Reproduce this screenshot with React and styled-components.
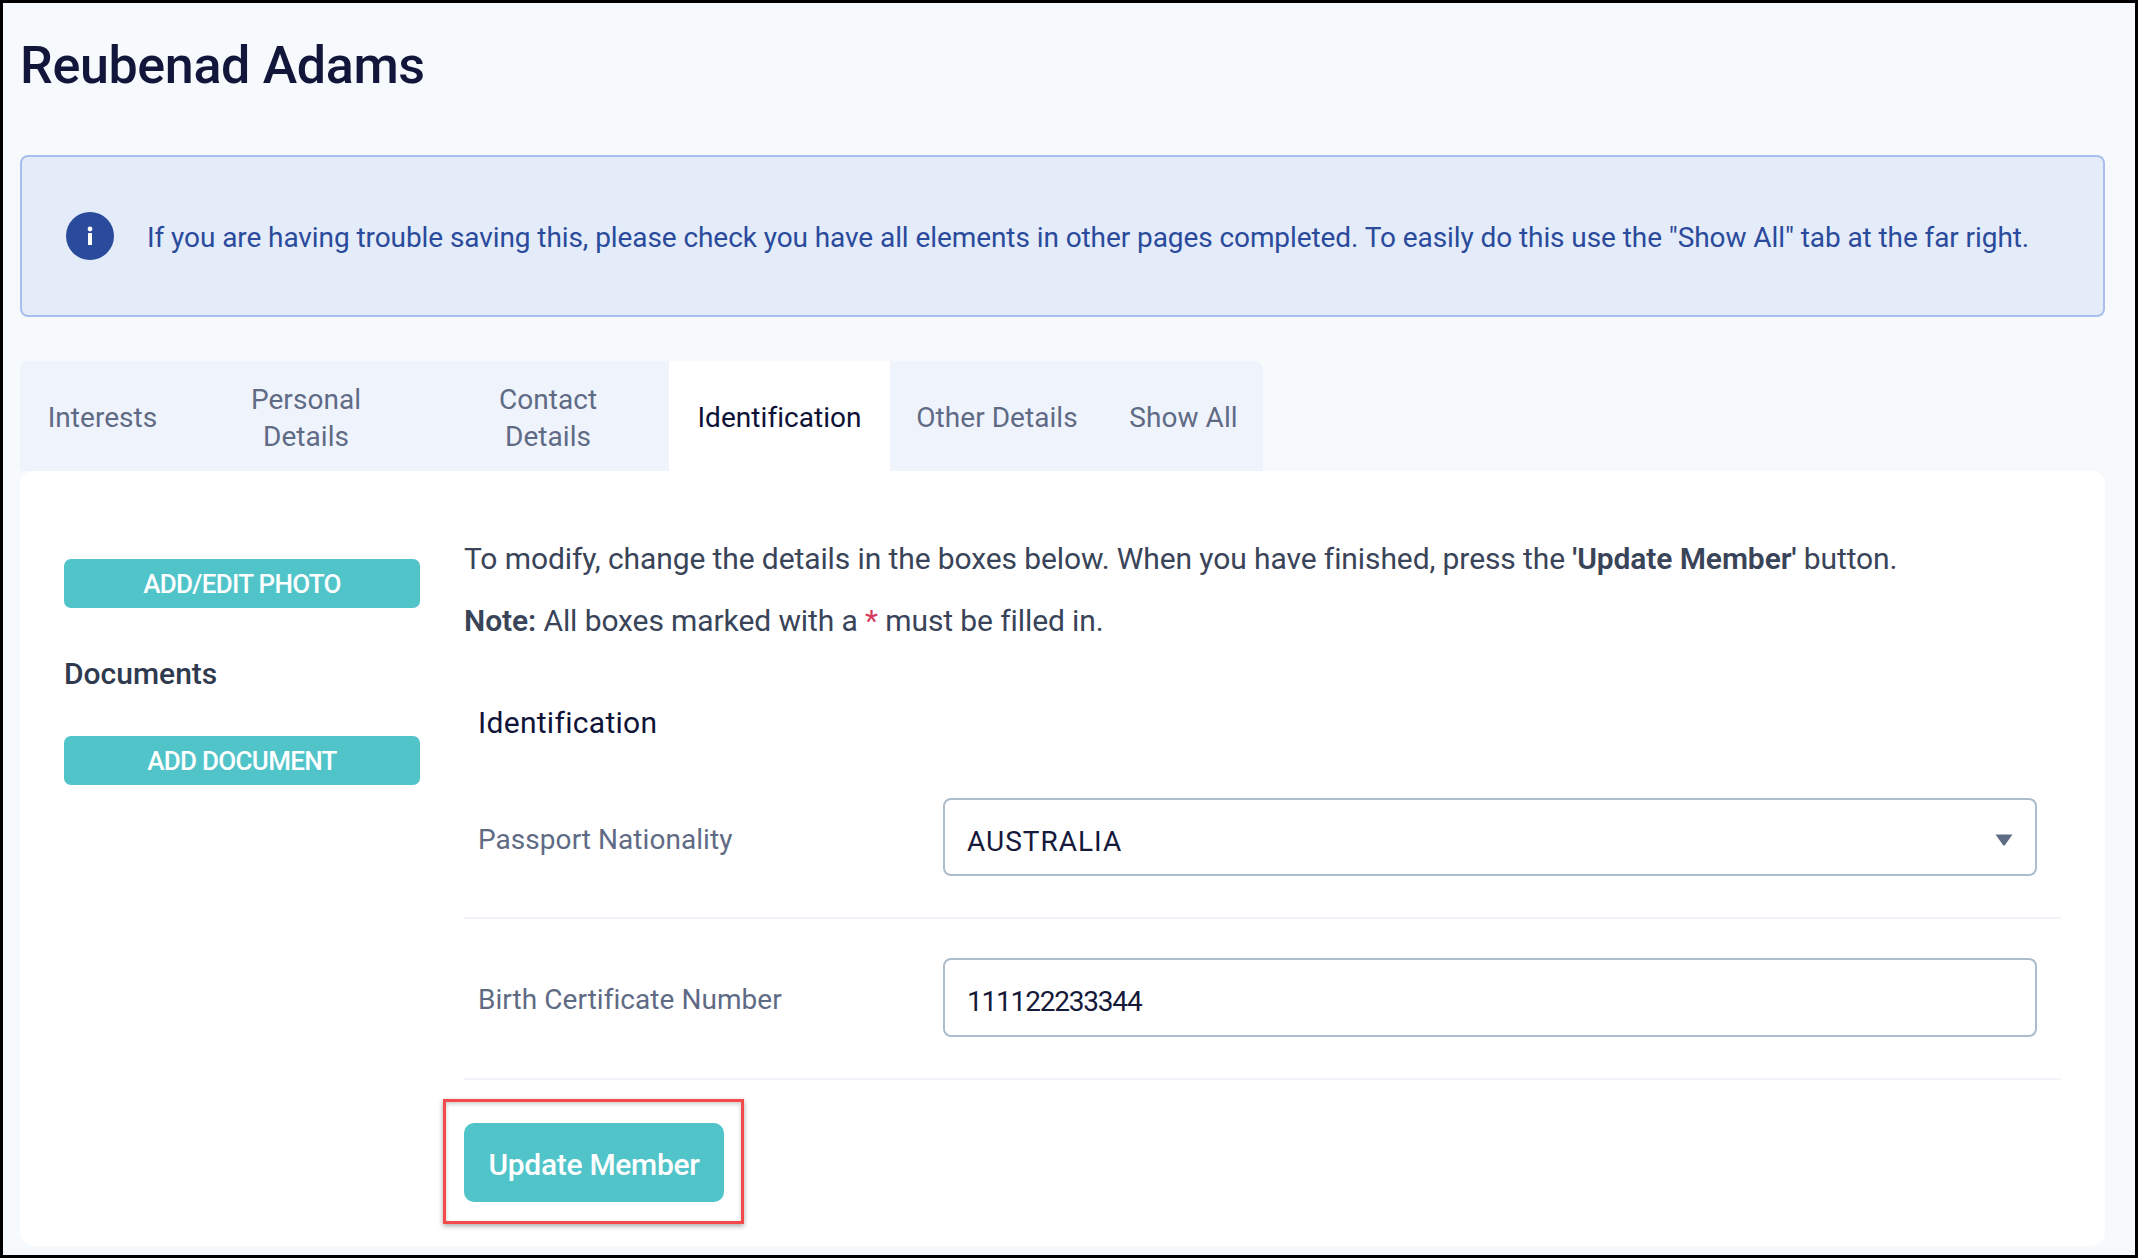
import React from 'react';
import styled, { createGlobalStyle } from 'styled-components';

const GlobalStyle = createGlobalStyle`
  html, body {
    margin: 0;
    padding: 0;
    background: #000;
  }
  * {
    box-sizing: border-box;
  }
`;

const Page = styled.div`
  width: 2138px;
  height: 1258px;
  border: 3px solid #000;
  background: #f6fafd;
  padding: 0 30px 0 17px;
  overflow: hidden;
  font-family: Roboto, 'Liberation Sans', sans-serif;
  font-size: 28px;
  line-height: 36px;
`;

const Title = styled.h1`
  margin: 0;
  padding-top: 33px;
  height: 152px;
  font-size: 52px;
  line-height: 60px;
  font-weight: 500;
  letter-spacing: -0.35px;
  color: #11163a;
`;

const Alert = styled.div`
  height: 162px;
  display: flex;
  align-items: center;
  gap: 33px;
  padding-left: 44px;
  background: #e4ebf9;
  border: 2px solid #a9bdee;
  border-radius: 8px;
  color: #2a4a9c;
  letter-spacing: -0.08px;
  white-space: nowrap;
`;

const AlertText = styled.span`
  padding-top: 3px;
`;

const Tabs = styled.div`
  display: flex;
  width: 1243px;
  height: 110px;
  margin-top: 44px;
  background: #eff4fc;
  border-radius: 8px 8px 0 0;
`;

const Tab = styled.div`
  flex: 0 0 ${({ $width }) => $width}px;
  display: flex;
  align-items: center;
  justify-content: center;
  padding-top: 3px;
  text-align: center;
  line-height: 37px;
  letter-spacing: 0.05px;
  color: ${({ $active }) => ($active ? '#0d1136' : '#5f6b85')};
  background: ${({ $active }) => ($active ? '#fff' : 'transparent')};
`;

const Card = styled.div`
  height: 775px;
  display: grid;
  grid-template-columns: 356px 1fr;
  column-gap: 44px;
  padding: 0 44px 0 44px;
  background: #fff;
  border-radius: 14px;
`;

const Side = styled.div`
  padding-top: 88px;
`;

const SideButton = styled.button`
  display: block;
  width: 100%;
  height: 49px;
  padding: 2px 0 0;
  border: none;
  border-radius: 7px;
  background: #50c4c9;
  color: #fff;
  font: 500 26px/47px Roboto, 'Liberation Sans', sans-serif;
  letter-spacing: -0.7px;
`;

const SideHeading = styled.div`
  margin: 48px 0 44px;
  font-size: 30px;
  font-weight: 500;
  color: #2f3a4f;
`;

const Main = styled.div`
  padding-top: 70px;
`;

const Intro = styled.p`
  margin: 0 0 26px;
  font-size: 30px;
  color: #3a4459;
  letter-spacing: -0.1px;

  b {
    font-weight: 600;
  }
`;

const Required = styled.span`
  color: #d33a5c;
`;

const SectionTitle = styled.h2`
  margin: 66px 0 57px 14px;
  font-size: 30px;
  line-height: 36px;
  font-weight: 400;
  letter-spacing: 0.3px;
  color: #0f1338;
`;

const Row = styled.div`
  display: grid;
  grid-template-columns: 465px 1fr;
  align-items: center;
  padding: ${({ $first }) => ($first ? '0' : '39px')} 24px 41px 14px;
  border-bottom: 2px solid #f1f5fa;
`;

const Label = styled.label`
  padding-top: 5px;
  color: #5f6b85;
  letter-spacing: 0.05px;
`;

const SelectWrap = styled.div`
  position: relative;

  svg {
    position: absolute;
    top: 36px;
    right: 24px;
  }
`;

const Select = styled.select`
  display: block;
  width: 100%;
  height: 78px;
  padding: 8px 22px 0;
  appearance: none;
  background: #fff;
  border: 2px solid #adbccb;
  border-radius: 8px;
  color: #15193a;
  font: 400 28px Roboto, 'Liberation Sans', sans-serif;
  letter-spacing: 1px;
`;

const Input = styled.input`
  display: block;
  width: 100%;
  height: 79px;
  padding: 7px 22px 0;
  background: #fff;
  border: 2px solid #adbccb;
  border-radius: 8px;
  color: #15193a;
  font: 400 28px Roboto, 'Liberation Sans', sans-serif;
  letter-spacing: -1.2px;
`;

const Actions = styled.div`
  position: relative;
  width: 260px;
  margin-top: 43px;
`;

const SubmitButton = styled.button`
  display: block;
  width: 260px;
  height: 79px;
  padding: 3px 0 0;
  border: none;
  border-radius: 10px;
  background: #50c4c9;
  color: #fff;
  font: 500 30px Roboto, 'Liberation Sans', sans-serif;
  letter-spacing: -0.3px;
`;

const Highlight = styled.div`
  position: absolute;
  top: -24px;
  left: -21px;
  width: 301px;
  height: 125px;
  border: 3px solid #f44a4a;
  box-shadow: 0 2px 5px rgba(0, 0, 0, 0.35), inset 0 2px 4px rgba(0, 0, 0, 0.2);
  pointer-events: none;
`;

const InfoIcon = () => (
  <svg width="48" height="48" viewBox="0 0 48 48" aria-hidden="true">
    <circle cx="24" cy="24" r="24" fill="#2a4a9c" />
    <circle cx="24" cy="17" r="2.4" fill="#fff" />
    <rect x="22" y="21" width="4" height="12" rx="0.5" fill="#fff" />
  </svg>
);

const CaretIcon = () => (
  <svg width="18" height="12" viewBox="0 0 18 12" aria-hidden="true">
    <path d="M0.5 0.5h17L10 11a1.2 1.2 0 0 1-2 0z" fill="#5e6b85" />
  </svg>
);

const tabs = [
  { label: 'Interests', width: 165 },
  { label: <>Personal<br />Details</>, width: 242 },
  { label: <>Contact<br />Details</>, width: 242 },
  { label: 'Identification', width: 221, active: true },
  { label: 'Other Details', width: 214 },
  { label: 'Show All', width: 159 },
];

const App = () => (
  <>
    <GlobalStyle />
    <Page>
      <Title>Reubenad Adams</Title>
      <Alert>
        <InfoIcon />
        <AlertText>If you are having trouble saving this, please check you have all elements in other pages completed. To easily do this use the "Show All" tab at the far right.</AlertText>
      </Alert>
      <Tabs>
        {tabs.map((tab, i) => (
          <Tab key={i} $width={tab.width} $active={tab.active}>{tab.label}</Tab>
        ))}
      </Tabs>
      <Card>
        <Side>
          <SideButton>ADD/EDIT PHOTO</SideButton>
          <SideHeading>Documents</SideHeading>
          <SideButton>ADD DOCUMENT</SideButton>
        </Side>
        <Main>
          <Intro>To modify, change the details in the boxes below. When you have finished, press the <b>'Update Member'</b> button.</Intro>
          <Intro><b>Note:</b> All boxes marked with a <Required>*</Required> must be filled in.</Intro>
          <SectionTitle>Identification</SectionTitle>
          <Row $first>
            <Label>Passport Nationality</Label>
            <SelectWrap>
              <Select defaultValue="AUSTRALIA">
                <option>AUSTRALIA</option>
              </Select>
              <CaretIcon />
            </SelectWrap>
          </Row>
          <Row>
            <Label>Birth Certificate Number</Label>
            <Input defaultValue="111122233344" />
          </Row>
          <Actions>
            <SubmitButton>Update Member</SubmitButton>
            <Highlight />
          </Actions>
        </Main>
      </Card>
    </Page>
  </>
);

export default App;
